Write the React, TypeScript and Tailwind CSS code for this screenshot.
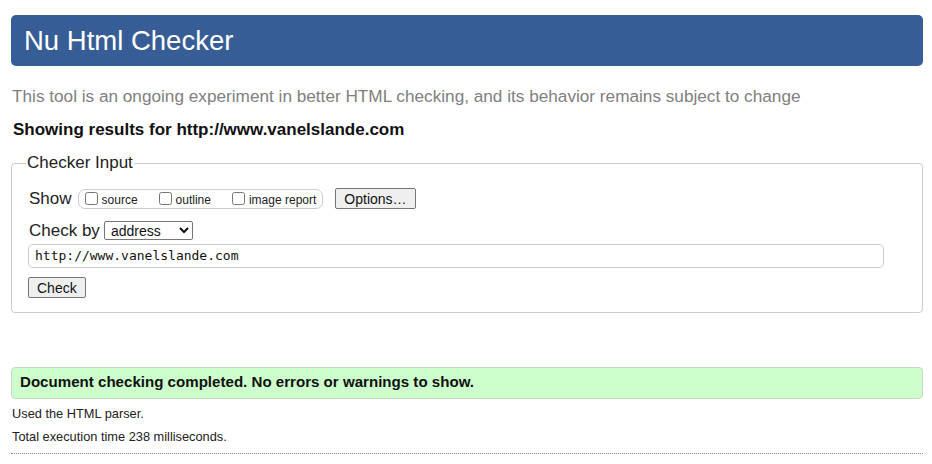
import React from 'react';

const font = { fontFamily: '"Liberation Sans", Arial, sans-serif' };

const Opt: React.FC<{ label: string; last?: boolean }> = ({ label, last }) => (
  <label className={`flex items-center ${last ? '' : 'mr-[21px]'}`}>
    <input type="checkbox" className="w-[13px] h-[13px] m-0 mr-[4px]" />
    <span className="text-[12px] text-[#222] mt-[3px]">{label}</span>
  </label>
);

const App: React.FC = () => {
  return (
    <div className="w-[932px] h-[464px] bg-white text-[#222] overflow-hidden pt-[15px]" style={font}>
      <h1 className="ml-[11px] mr-[9px] h-[51px] bg-[#365d95] rounded-[5px] text-white text-[27.5px] leading-none px-[13px] flex items-center">
        Nu Html Checker
      </h1>

      <p className="mx-[12px] mt-[21px] text-[17.2px] leading-[19px] text-[#808080]">
        This tool is an ongoing experiment in better HTML checking, and its behavior remains subject to change
      </p>

      <p className="mx-[13px] mt-[14px] text-[17px] leading-[19px] font-bold text-[#111]">
        Showing results for http://www.vanelslande.com
      </p>

      <fieldset className="ml-[11px] mr-[9px] mt-[14px] border border-[#cccccc] rounded-[4px] pl-[16px] pr-[38px] pb-[12px]">
        <legend className="ml-[-2px] px-[1px] text-[17px] leading-[20px] text-[#222]">Checker Input</legend>

        <div className="flex items-center mt-[15px]">
          <span className="text-[17px] leading-[18px] ml-[1px] mr-[6px]">Show</span>
          <div className="flex items-center h-[20px] border border-[#cccccc] rounded-[7px] pl-[6px] pr-[6px]">
            <Opt label="source" />
            <Opt label="outline" />
            <Opt label="image report" last />
          </div>
          <button className="ml-[12px] h-[21px] px-[8px] bg-[#efefef] border border-[#767676] rounded-[2px] text-[14px] leading-none text-[#111]">
            Options…
          </button>
        </div>

        <div className="flex items-center mt-[12px]">
          <span className="text-[17px] leading-[18px] ml-[1px] mr-[4px]">Check by</span>
          <select className="w-[89px] h-[19px] border border-[#767676] rounded-[2px] text-[14px] leading-none pl-[2px] text-[#111]" defaultValue="address">
            <option value="address">address</option>
          </select>
        </div>

        <div
          className="mt-[4px] h-[24px] border border-[#cccccc] rounded-[5px] px-[6px] flex items-center text-[13px] text-[#111]"
          style={{ fontFamily: '"DejaVu Sans Mono", monospace' }}
        >
          http://www.vanelslande.com
        </div>

        <button className="mt-[9px] h-[21px] px-[8px] bg-[#efefef] border border-[#767676] rounded-[2px] text-[14px] leading-none text-[#111]">
          Check
        </button>
      </fieldset>

      <div className="ml-[11px] mr-[9px] mt-[54px] h-[32px] bg-[#ccffcc] border border-[#c8d8c8] rounded-[4px] flex items-center px-[8px] text-[15.1px] font-bold text-[#111]">
        Document checking completed. No errors or warnings to show.
      </div>

      <p className="mx-[12px] mt-[6px] text-[12.8px] leading-[18px] text-[#222]">Used the HTML parser.</p>
      <p className="mx-[12px] mt-[5px] text-[12.8px] leading-[18px] text-[#222]">Total execution time 238 milliseconds.</p>

      <div className="ml-[11px] mr-[9px] mt-[7px] border-t border-dotted border-[#888]" />
    </div>
  );
};

export default App;
